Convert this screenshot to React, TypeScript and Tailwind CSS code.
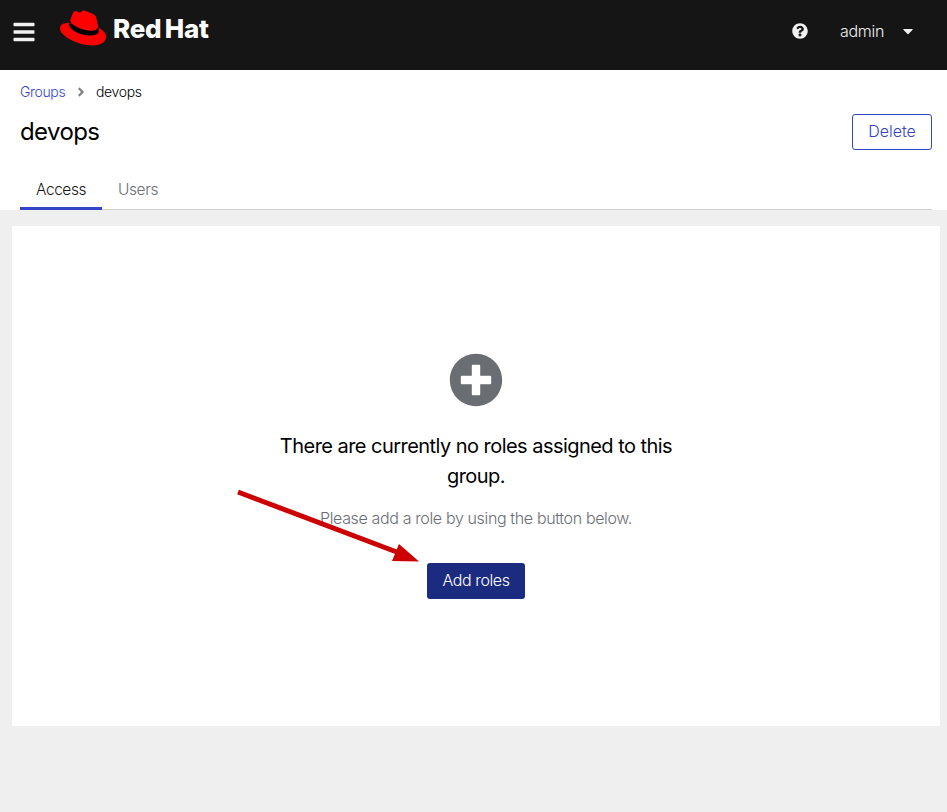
import type { ReactNode } from "react";
import { FaAngleRight, FaBars, FaCaretDown, FaPlusCircle, FaQuestionCircle, FaRedhat } from "react-icons/fa";

function Masthead() {
  return (
    <header className="flex h-[70px] items-start bg-[#151515] text-white">
      <button aria-label="Menu" className="ml-3 mt-5 text-[24px] text-[#f0f0f0]">
        <FaBars />
      </button>
      <div className="ml-6 mt-[5px] flex">
        <div className="relative h-[46px] w-[46px]">
          <svg viewBox="0 0 46 46" className="absolute inset-0 h-full w-full">
            <path d="M9 16 L10 22 C17 32 30 33 39 29 L38 22 Z" fill="#000" />
          </svg>
          <FaRedhat className="absolute inset-0 h-full w-full text-[#ff0000]" />
        </div>
        <span className="ml-[7px] mt-[6px] w-24 whitespace-nowrap text-[26px] font-extrabold leading-9 tracking-[-0.3px] [word-spacing:-1.8px]">
          Red Hat
        </span>
      </div>
      <div className="ml-auto flex h-[62px] items-center pr-[34px] text-[#f0f0f0]">
        <FaQuestionCircle className="text-[16px]" />
        <span className="ml-8 w-11 whitespace-nowrap text-base font-light tracking-[-0.3px]">admin</span>
        <FaCaretDown className="ml-[19px] w-[10px] text-[16px]" />
      </div>
    </header>
  );
}

function Tab({ active, children }: { active?: boolean; children: ReactNode }) {
  return (
    <button
      className={
        active
          ? "h-10 w-[82px] border-b-3 border-[#3345c6] pt-[2px] text-[15.5px] font-light leading-[35px] tracking-[-0.45px] text-[#151515]"
          : "h-10 w-[72px] border-b-3 border-transparent pt-[2px] text-[15.5px] font-light leading-[35px] tracking-[-0.35px] text-[#6a6e73]"
      }
    >
      {children}
    </button>
  );
}

export default function App() {
  return (
    <div className="relative h-[812px] w-[947px] overflow-hidden bg-[#efefef] font-['Inter','Liberation_Sans',sans-serif] text-black">
      <Masthead />
      <section className="h-[140px] bg-white pl-5 pr-[15px]">
        <nav className="flex h-11 items-center text-sm font-light tracking-[-0.35px]">
          <a className="w-[46px] whitespace-nowrap text-[#3345d6]">Groups</a>
          <FaAngleRight className="ml-[10px] w-[10px] text-[14px] text-[#7d8083]" />
          <span className="ml-[10px]">devops</span>
        </nav>
        <div className="flex h-9 items-center justify-between">
          <h1 className="text-2xl font-[430] tracking-[-0.6px]">devops</h1>
          <button className="h-9 w-20 rounded-[3px] border border-[#3345c6] pb-[2px] text-base font-light text-[#3345c6]">
            Delete
          </button>
        </div>
        <div className="mt-5 flex h-10 shadow-[inset_0_-1px_0_#d2d2d2]">
          <Tab active>Access</Tab>
          <Tab>Users</Tab>
        </div>
      </section>
      <main className="ml-3 mt-4 flex h-[500px] w-[928px] flex-col items-center bg-white pt-[127px]">
        <FaPlusCircle className="h-[54px] w-[54px] text-[#6a6e73]" />
        <h2 className="mt-6 w-[410px] text-center text-xl font-[430] leading-[30px] tracking-[-0.54px]">
          There are currently no roles assigned to this group.
        </h2>
        <p className="mb-px mt-[15px] text-base font-light leading-6 tracking-[-0.36px] text-[#6a6e73]">
          Please add a role by using the button below.
        </p>
        <button className="mt-8 h-9 w-[98px] rounded-[3px] bg-[#1b2b80] pb-[2px] text-base font-light tracking-[-0.4px] text-white">
          Add roles
        </button>
      </main>
      <svg className="absolute left-0 top-0" width="947" height="812">
        <path d="M238 492 L398 552.5" stroke="#cc0000" strokeWidth="5" />
        <path d="M399 544 L419 561.5 L392 561 Z" fill="#cc0000" />
      </svg>
    </div>
  );
}
